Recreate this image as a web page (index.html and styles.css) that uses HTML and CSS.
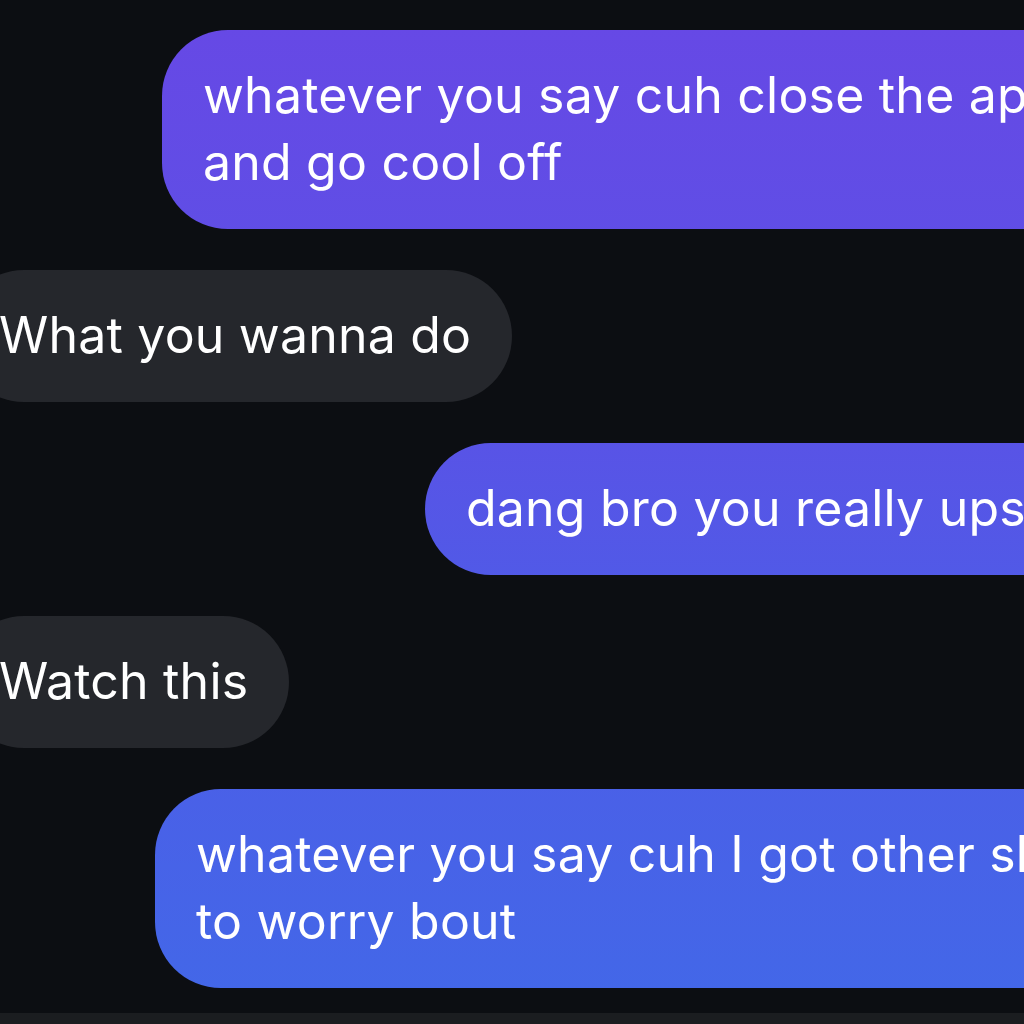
FILE: index.html
```html
<!DOCTYPE html>
<html lang="en">
<head>
  <meta charset="UTF-8">
  <title>Messages</title>
  <link rel="stylesheet" href="styles.css">
</head>
<body>
  <div class="thread">
    <div class="bubble sent first">whatever you say cuh close the app<br>and go cool off</div>
    <div class="bubble received">What you wanna do</div>
    <div class="bubble sent second">dang bro you really upset</div>
    <div class="bubble received">Watch this</div>
    <div class="bubble sent third">whatever you say cuh I got other shit<br>to worry bout</div>
  </div>
  <div class="input-bar"></div>
</body>
</html>
```

FILE: styles.css
```css
:root {
  --bg: #0c0e12;
  --gray-bubble: #25272c;
  --bar: #1b1d20;
}

html, body {
  margin: 0;
  height: 100%;
  overflow: hidden;
  background: var(--bg);
}

body {
  font-family: Inter, "Noto Sans", sans-serif;
  color: #fff;
  display: flex;
  flex-direction: column;
}

.thread {
  flex: 1;
  display: flex;
  flex-direction: column;
  align-items: flex-start;
  gap: 41px;
  padding-top: 30px;
  overflow: hidden;
}

.bubble {
  font-size: 50px;
  line-height: 67px;
  letter-spacing: 0.2px;
  padding: 32px 41px 33px;
  border-radius: 66px;
  white-space: nowrap;
  box-sizing: border-box;
  flex-shrink: 0;
}

.sent {
  background: linear-gradient(180deg, #6748e5 0%, #5a52e6 40%, #4f5be7 60%, #4268e8 100%) fixed;
}

.received {
  background: var(--gray-bubble);
  margin-left: -42px;
}

.first { margin-left: 162px; width: 1000px; }
.second { margin-left: 425px; width: 800px; }
.third { margin-left: 155px; width: 1000px; }

.input-bar {
  height: 11px;
  flex-shrink: 0;
  background: var(--bar);
}
```
